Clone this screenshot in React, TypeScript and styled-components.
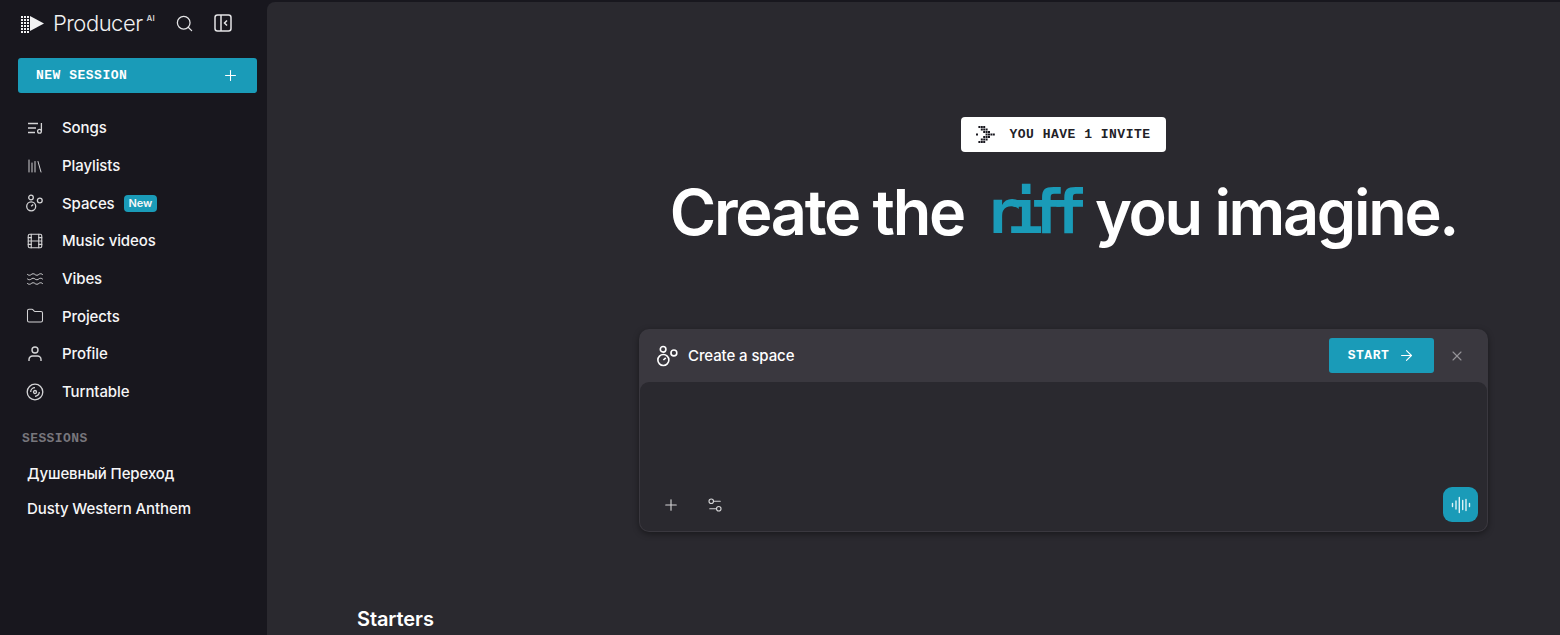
import styled, { createGlobalStyle } from "styled-components";
import { ArrowRight, Film, Folder, Library, Plus, Search, Settings2, Waves, X } from "lucide-react";

const GlobalStyle = createGlobalStyle`
  html, body {
    margin: 0;
    height: 100%;
    background: #18171e;
    overflow: hidden;
    font-family: "Inter", "Noto Sans", sans-serif;
  }
  * { box-sizing: border-box; }
`;

const Page = styled.div`
  display: flex;
  width: 1560px;
  height: 635px;
  overflow: hidden;
`;
const Sidebar = styled.aside`
  width: 267px;
  flex-shrink: 0;
  padding: 0 10px 0 18px;
  color: #fff;
`;
const BrandRow = styled.div`
  display: flex;
  align-items: center;
  height: 46px;
  padding-left: 2px;
`;
const BrandName = styled.span`
  margin-left: 8px;
  font-size: 22px;
  font-weight: 300;
  letter-spacing: -0.5px;
  color: #f1f1f2;
`;
const BrandTag = styled.sup`
  font-size: 8px;
  font-weight: 600;
  margin: -10px 0 0 4px;
  color: #d5d5d7;
`;
const BrandActions = styled.div`
  display: flex;
  align-items: center;
  gap: 20px;
  margin-left: 20px;
  color: #e4e4e6;
`;
const NewSession = styled.button`
  display: flex;
  align-items: center;
  justify-content: space-between;
  width: 239px;
  height: 35px;
  margin-top: 12px;
  padding: 0 18px;
  border: 0;
  border-radius: 3px;
  background: #1a9bb8;
  color: #fff;
  font-family: "Liberation Mono", monospace;
  font-weight: 700;
  font-size: 13px;
  letter-spacing: 0.5px;
`;
const Nav = styled.nav`
  margin-top: 16px;
`;
const NavRow = styled.div`
  display: flex;
  align-items: center;
  height: 37.7px;
  padding-left: 8px;
  font-size: 15px;
  font-weight: 500;
  letter-spacing: -0.1px;
  color: #f6f6f7;
`;
const NavIcon = styled.span`
  display: flex;
  justify-content: center;
  width: 18px;
  margin-right: 18px;
  color: #d4d4d6;
`;
const NewBadge = styled.span`
  margin-left: 9px;
  padding: 2px 5px;
  border-radius: 4px;
  background: #1a9bb8;
  font-size: 11px;
  font-weight: 600;
  line-height: 13px;
`;
const SectionLabel = styled.div`
  margin: 19px 0 0 4px;
  font-family: "Liberation Mono", monospace;
  font-weight: 700;
  font-size: 13px;
  letter-spacing: 0.4px;
  line-height: 18px;
  color: #77767c;
`;
const SessionRow = styled.div`
  display: flex;
  align-items: center;
  height: 35px;
  padding-left: 9px;
  font-size: 15px;
  font-weight: 500;
  letter-spacing: -0.1px;
  color: #f6f6f7;
`;
const SessionList = styled.div`
  margin-top: 8px;
`;
const Main = styled.main`
  flex: 1;
  display: flex;
  flex-direction: column;
  margin-top: 2px;
  padding: 115px 72px 0 90px;
  background: #2a292f;
  border-top-left-radius: 8px;
  color: #fff;
`;
const Hero = styled.section`
  display: flex;
  flex-direction: column;
  align-items: center;
  align-self: flex-end;
  width: 849px;
`;
const InviteBadge = styled.div`
  display: flex;
  align-items: center;
  gap: 14px;
  height: 35px;
  padding: 0 15px;
  border-radius: 4px;
  background: #fff;
  color: #222127;
  font-family: "Liberation Mono", monospace;
  font-weight: 700;
  font-size: 13px;
  letter-spacing: 0.5px;
`;
const Title = styled.h1`
  display: flex;
  justify-content: center;
  align-items: center;
  width: 900px;
  height: 90px;
  margin: 15px 0 0;
  font-size: 63px;
  font-weight: 600;
  letter-spacing: -2.3px;
  white-space: nowrap;
`;
const Riff = styled.span`
  width: 85px;
  margin: 0 25px 0 21px;
  color: #1a9bb8;
  font-family: "DejaVu Sans Mono", monospace;
  font-weight: 700;
  font-size: 60px;
  letter-spacing: -14px;
`;
const Composer = styled.div`
  width: 849px;
  height: 203px;
  margin-top: 72px;
  padding: 0 1px 1px;
  border-radius: 10px;
  background: #3a383f;
  box-shadow: 0 2px 6px rgba(0, 0, 0, 0.4);
`;
const ComposerHead = styled.div`
  display: flex;
  align-items: center;
  height: 53px;
  padding: 0 22px 0 17px;
  font-size: 15px;
  font-weight: 500;
  letter-spacing: -0.1px;
`;
const HeadLabel = styled.span`
  flex: 1;
  margin-left: 9px;
`;
const StartButton = styled.button`
  display: flex;
  align-items: center;
  justify-content: center;
  gap: 9px;
  width: 105px;
  height: 35px;
  margin-right: 15px;
  border: 0;
  border-radius: 3px;
  background: #1a9bb8;
  color: #fff;
  font-family: "Liberation Mono", monospace;
  font-weight: 700;
  font-size: 13px;
  letter-spacing: 0.5px;
`;
const CloseIcon = styled(X)`
  color: #96959a;
`;
const ComposerBody = styled.div`
  display: flex;
  align-items: flex-end;
  height: 149px;
  padding: 0 9px 9px 22px;
  border-radius: 9px;
  background: #2a292f;
`;
const ToolRow = styled.div`
  display: flex;
  flex: 1;
  align-items: center;
  gap: 26px;
  height: 35px;
  color: #d4d4d6;
`;
const VoiceButton = styled.button`
  display: flex;
  align-items: center;
  justify-content: center;
  width: 35px;
  height: 35px;
  padding: 0;
  border: 0;
  border-radius: 9px;
  background: #1a9bb8;
  color: #dff3f7;
`;
const Starters = styled.h2`
  margin: 75px 0 0;
  font-size: 20px;
  font-weight: 600;
  line-height: 24px;
  letter-spacing: -0.1px;
`;

function ArrowLogo() {
  const dots: [number, number][] = [];
  [4, 7, 10, 13, 16, 19].forEach((y) => [1, 4, 7].forEach((x) => dots.push([x, y])));
  return (
    <svg width="25" height="23" viewBox="0 0 25 23" fill="#f2f2f3">
      {dots.map(([x, y]) => (
        <rect key={`${x}-${y}`} x={x} y={y} width="2" height="2" />
      ))}
      <path d="M10 4l14 7.500L10 19z" />
    </svg>
  );
}

function InviteMark() {
  const cells = [
    [1, 0], [2, 0], [3, 0], [2, 1], [3, 1], [4, 1], [3, 2], [4, 2], [5, 2], [4, 3], [5, 3], [6, 3],
    [7, 3], [3, 4], [4, 4], [5, 4], [2, 5], [3, 5], [4, 5], [1, 6], [2, 6], [3, 6], [0, 3],
  ];
  return (
    <svg width="19" height="18" viewBox="0 0 19 18" fill="#18171e">
      {cells.map(([x, y]) => (
        <rect key={`${x}-${y}`} x={x * 2.4} y={y * 2.5} width="2" height="2" />
      ))}
    </svg>
  );
}

function PanelIcon() {
  return (
    <svg width="18" height="18" viewBox="0 0 18 18" fill="none" stroke="currentColor" strokeWidth="1.500">
      <rect x="1" y="1" width="16" height="16" rx="2.500" />
      <path d="M7 1v16M13 6.500L10.500 9l2.500 2.500" />
    </svg>
  );
}

function SongsIcon() {
  return (
    <svg width="17" height="12" viewBox="0 0 17 12" fill="none" stroke="currentColor" strokeWidth="1.300">
      <path d="M1 1.500h10M1 6h8M1 10.500h7" />
      <circle cx="12.500" cy="9.300" r="1.900" />
      <path d="M14.400 9.300V1" />
    </svg>
  );
}

function SpacesIcon({ size = 18 }: { size?: number }) {
  return (
    <svg width={size} height={size} viewBox="0 0 18 18" fill="none" stroke="currentColor" strokeWidth="1.300">
      <circle cx="5" cy="3.500" r="2.300" />
      <circle cx="13.800" cy="6.500" r="2.400" />
      <circle cx="5.200" cy="12.300" r="4.500" />
      <path d="M5.200 12.300l2-1.800" />
    </svg>
  );
}

function UserIcon() {
  return (
    <svg width="14" height="16" viewBox="0 0 14 16" fill="none" stroke="currentColor" strokeWidth="1.400">
      <circle cx="7" cy="4" r="3" />
      <path d="M1 15v-1.500A3.500 3.500 0 0 1 4.500 10h5a3.500 3.500 0 0 1 3.500 3.500V15" />
    </svg>
  );
}

function TurntableIcon() {
  return (
    <svg width="18" height="18" viewBox="0 0 18 18" fill="none" stroke="currentColor" strokeWidth="1.300">
      <circle cx="9" cy="9" r="7.800" />
      <circle cx="9" cy="9" r="1.500" />
      <path d="M4.700 9A4.300 4.300 0 0 1 9 4.700M13.300 9A4.300 4.300 0 0 1 9 13.300" />
    </svg>
  );
}

function VoiceIcon() {
  return (
    <svg width="20" height="18" viewBox="0 0 20 18" fill="none" stroke="currentColor" strokeWidth="1.400" strokeLinecap="round">
      <path d="M1.500 7.500v3M5 5v8M8.300 1.500v15M11.700 4.500v9M15 3.500v11M18.500 7.500v3" />
    </svg>
  );
}

const navItems = [
  { label: "Songs", icon: <SongsIcon /> },
  { label: "Playlists", icon: <Library size={18} strokeWidth={1.3} /> },
  { label: "Spaces", icon: <SpacesIcon />, isNew: true },
  { label: "Music videos", icon: <Film size={18} strokeWidth={1.5} /> },
  { label: "Vibes", icon: <Waves size={18} strokeWidth={1.3} /> },
  { label: "Projects", icon: <Folder size={18} strokeWidth={1.4} /> },
  { label: "Profile", icon: <UserIcon /> },
  { label: "Turntable", icon: <TurntableIcon /> },
];

const sessions = ["Душевный Переход", "Dusty Western Anthem"];

export default function App() {
  return (
    <Page>
      <GlobalStyle />
      <Sidebar>
        <BrandRow>
          <ArrowLogo />
          <BrandName>Producer</BrandName>
          <BrandTag>AI</BrandTag>
          <BrandActions>
            <Search size={19} strokeWidth={1.6} />
            <PanelIcon />
          </BrandActions>
        </BrandRow>
        <NewSession>
          NEW SESSION
          <Plus size={17} strokeWidth={1.5} />
        </NewSession>
        <Nav>
          {navItems.map((item) => (
            <NavRow key={item.label}>
              <NavIcon>{item.icon}</NavIcon>
              {item.label}
              {item.isNew && <NewBadge>New</NewBadge>}
            </NavRow>
          ))}
        </Nav>
        <SectionLabel>SESSIONS</SectionLabel>
        <SessionList>
          {sessions.map((name) => (
            <SessionRow key={name}>{name}</SessionRow>
          ))}
        </SessionList>
      </Sidebar>
      <Main>
        <Hero>
          <InviteBadge>
            <InviteMark />
            YOU HAVE 1 INVITE
          </InviteBadge>
          <Title>
            Create the<Riff>riff</Riff>you imagine.
          </Title>
          <Composer>
            <ComposerHead>
              <SpacesIcon size={22} />
              <HeadLabel>Create a space</HeadLabel>
              <StartButton>
                START
                <ArrowRight size={17} strokeWidth={1.5} />
              </StartButton>
              <CloseIcon size={16} strokeWidth={1.6} />
            </ComposerHead>
            <ComposerBody>
              <ToolRow>
                <Plus size={18} strokeWidth={1.5} />
                <Settings2 size={18} strokeWidth={1.5} />
              </ToolRow>
              <VoiceButton>
                <VoiceIcon />
              </VoiceButton>
            </ComposerBody>
          </Composer>
        </Hero>
        <Starters>Starters</Starters>
      </Main>
    </Page>
  );
}
